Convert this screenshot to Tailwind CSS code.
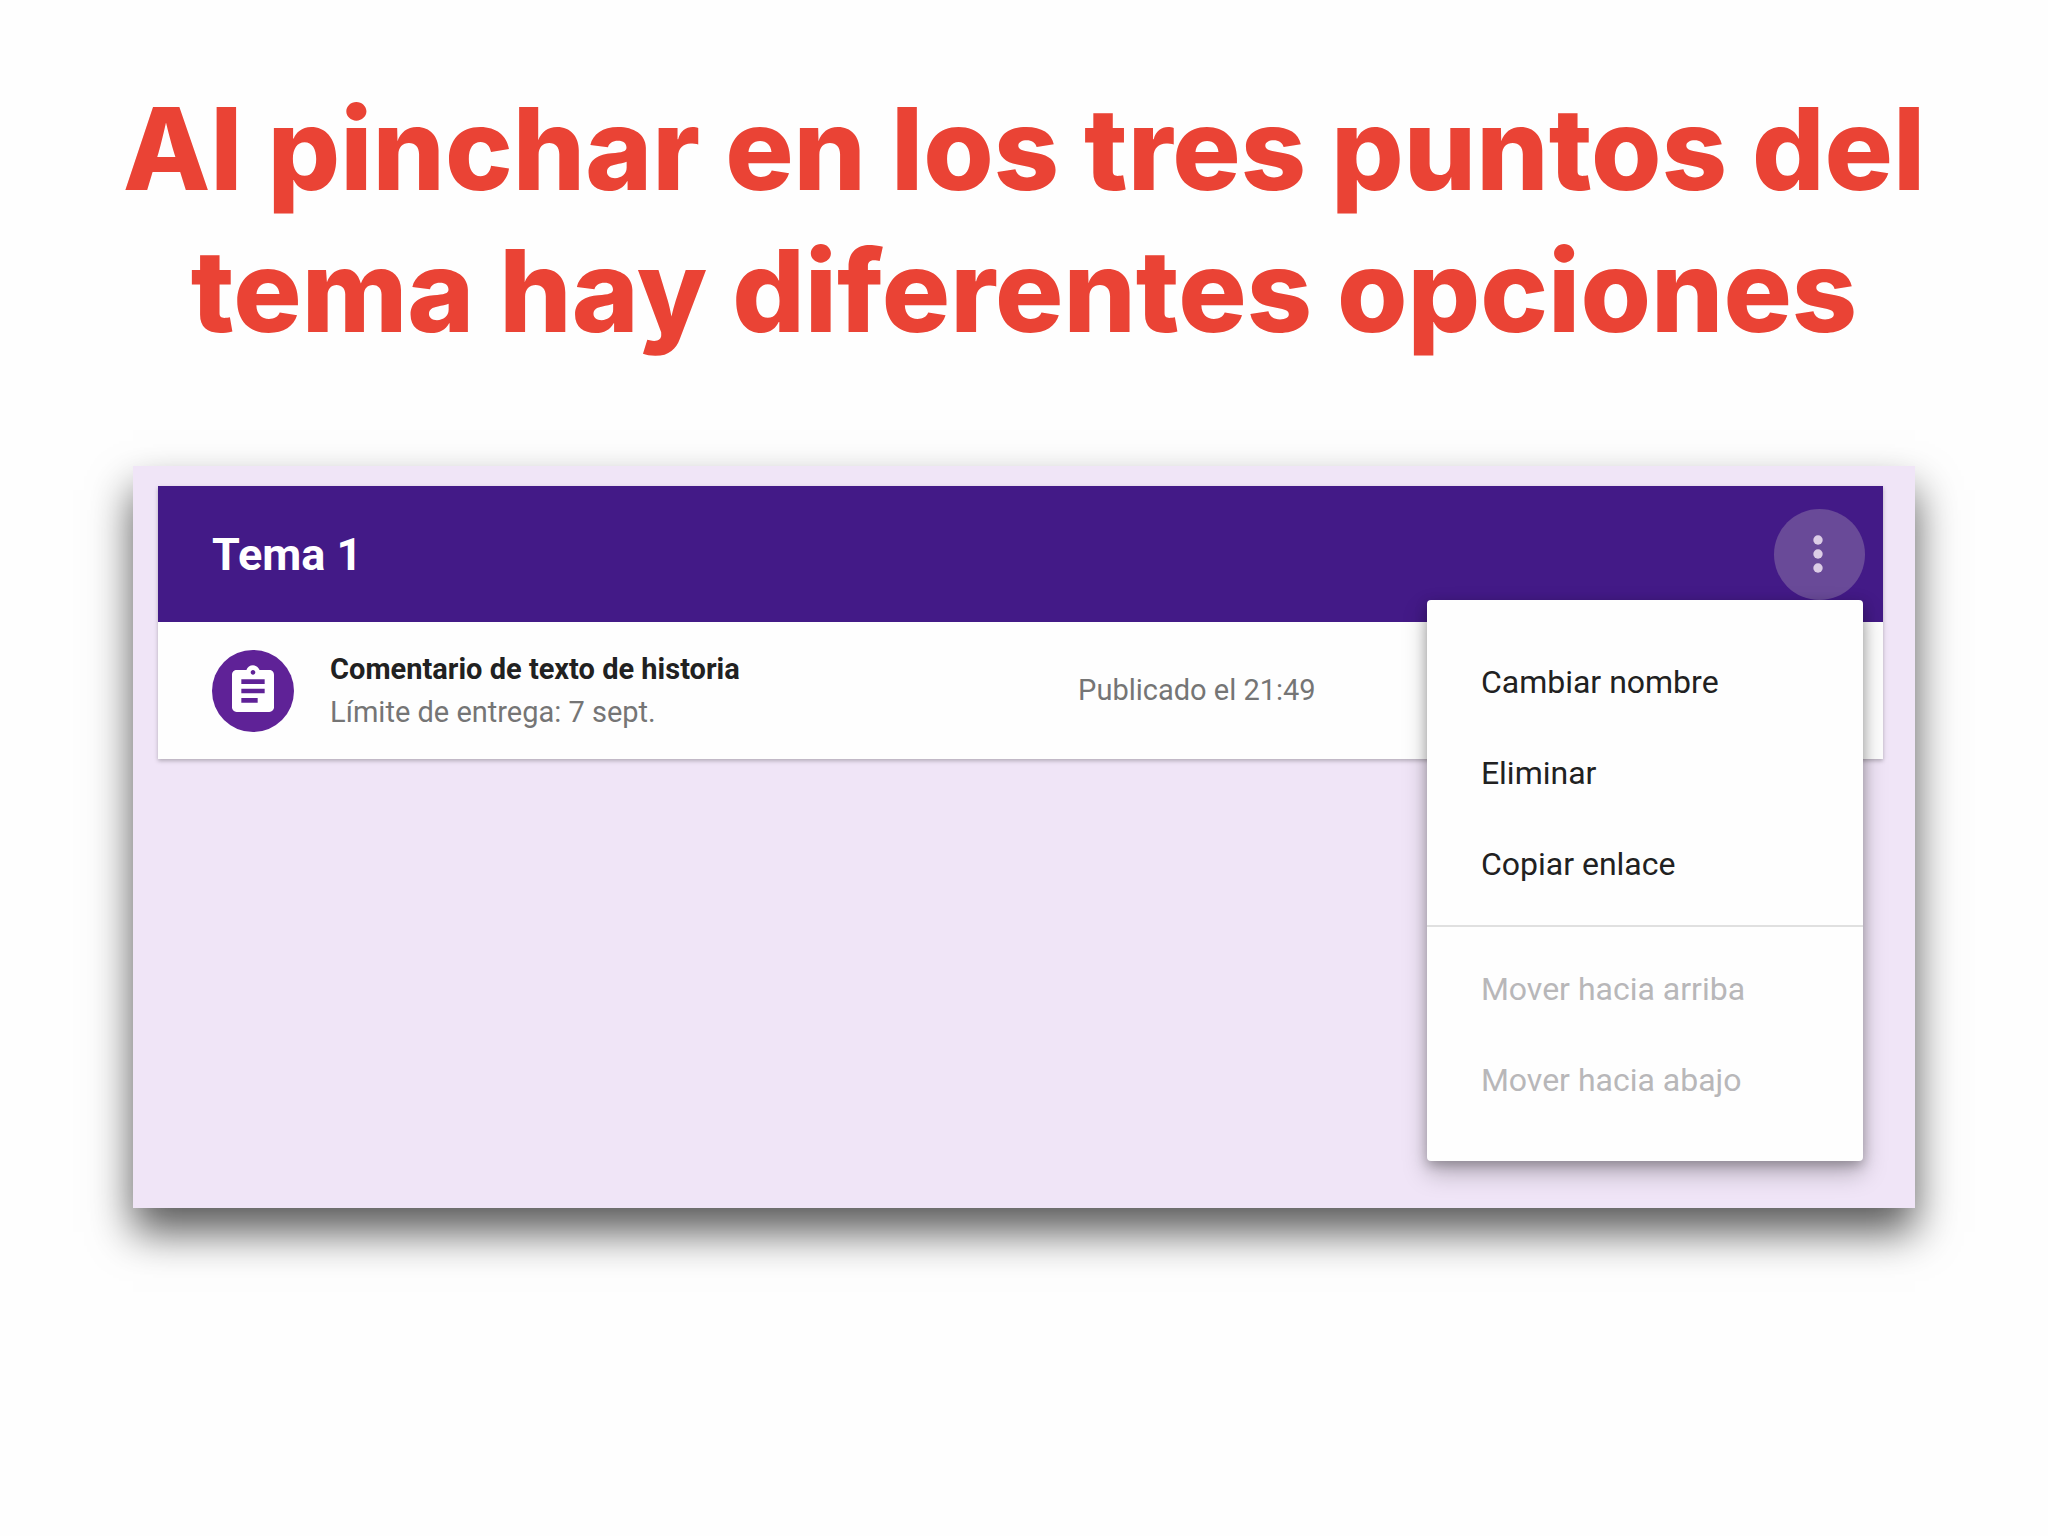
<!DOCTYPE html>
<html lang="es">
<head>
<meta charset="utf-8">
<meta name="viewport" content="width=device-width, initial-scale=1">
<title>Opciones del tema</title>
<script src="https://cdn.jsdelivr.net/npm/@tailwindcss/browser@4"></script>
</head>
<body class="min-h-screen bg-[#fefefe] font-['Roboto',sans-serif]">
<main class="px-[6.5%] pt-[78px]">
  <h1 class="-mx-8 text-center font-['Inter',sans-serif] text-[114px] font-extrabold leading-[142px] text-[#ea4335]"><span class="block whitespace-nowrap">Al pinchar en los tres puntos del</span><span class="block whitespace-nowrap">tema hay diferentes opciones</span></h1>

  <section class="mt-[104px] h-[742px] bg-[#f0e5f7] pt-5 pr-8 pl-[25px] shadow-[0_24px_40px_rgba(0,0,0,0.65)]">
    <article class="relative shadow-[0_2px_4px_rgba(0,0,0,0.25)]">
      <header class="flex h-[136px] items-center justify-between bg-[#431a87] pr-[18px] pl-[54px]">
        <h2 class="text-[45px] font-bold leading-none text-white">Tema 1</h2>
        <button type="button" aria-label="Opciones del tema" aria-haspopup="menu" aria-expanded="true" class="flex size-[91px] items-center justify-center rounded-full bg-[#694a98]">
          <svg class="h-10 w-3 fill-[#dccde6]" viewBox="0 0 12 40" aria-hidden="true"><circle cx="5" cy="6" r="4.700"/><circle cx="5" cy="20" r="4.700"/><circle cx="5" cy="34" r="4.700"/></svg>
        </button>
      </header>
      <div class="grid h-[137px] grid-cols-[minmax(0,866px)_1fr] items-center bg-[#fefefe] pl-[54px] pr-6">
        <div class="flex items-center gap-9 pr-6">
          <span class="flex size-[82px] shrink-0 items-center justify-center rounded-full bg-[#5f2297]">
            <svg class="size-14 fill-white" viewBox="0 0 24 24" aria-hidden="true"><path fill-rule="evenodd" d="M19 3h-4.180C14.400 1.840 13.300 1 12 1c-1.300 0-2.400.84-2.820 2H5c-1.100 0-2 .9-2 2v14c0 1.100.9 2 2 2h14c1.100 0 2-.9 2-2V5c0-1.100-.9-2-2-2zm-7 0c.55 0 1 .45 1 1s-.45 1-1 1-1-.45-1-1 .45-1 1-1zm2 14H7v-2h7v2zm3-4H7v-2h10v2zm0-4H7V7h10v2z"/></svg>
          </span>
          <div class="whitespace-nowrap text-[29px] leading-[43px]">
            <h3 class="font-bold text-[#212121]">Comentario de texto de historia</h3>
            <p class="text-[#757575]">Límite de entrega: 7 sept.</p>
          </div>
        </div>
        <p class="text-[29px] leading-[43px] text-[#757575]">Publicado el 21:49</p>
      </div>

      <div role="menu" class="absolute top-[114px] right-5 w-[436px] rounded bg-[#fefefe] pt-9 pb-9 text-[32px] text-[#212121] shadow-[0_12px_24px_rgba(0,0,0,0.25),0_4px_12px_rgba(0,0,0,0.25)]">
        <button type="button" role="menuitem" class="block h-[91px] w-full px-[54px] text-left">Cambiar nombre</button>
        <button type="button" role="menuitem" class="block h-[91px] w-full px-[54px] text-left">Eliminar</button>
        <button type="button" role="menuitem" class="block h-[91px] w-full px-[54px] text-left">Copiar enlace</button>
        <hr class="mt-4 mb-4 border-t-2 border-[#e0e0e0]">
        <button type="button" role="menuitem" disabled class="block h-[91px] w-full px-[54px] text-left text-[#b8b7b9]">Mover hacia arriba</button>
        <button type="button" role="menuitem" disabled class="block h-[91px] w-full px-[54px] text-left text-[#b8b7b9]">Mover hacia abajo</button>
      </div>
    </article>
  </section>
</main>
</body>
</html>
